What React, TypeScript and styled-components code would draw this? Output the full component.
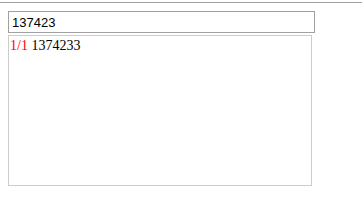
import React, { useState } from "react";
import styled, { createGlobalStyle } from "styled-components";

const GlobalStyle = createGlobalStyle`
    html, body {
        margin: 0;
        padding: 0;
        background: #fff;
    }
`;

const Page = styled.div`
    padding-top: 2px;
`;

const TopRule = styled.div`
    height: 1px;
    background: #a0a0a0;
    margin-right: 2px;
`;

const Panel = styled.div`
    display: flex;
    flex-direction: column;
    align-items: flex-start;
    gap: 2px;
    padding: 8px 0 0 8px;
`;

const SearchInput = styled.input`
    box-sizing: border-box;
    width: 307px;
    height: 22px;
    margin: 0;
    padding: 1px 3px;
    border: 1px solid #a0a0a0;
    font-family: "Liberation Sans", Arial, sans-serif;
    font-size: 13px;
    color: #000;
    outline: none;
`;

const Results = styled.div`
    box-sizing: border-box;
    width: 304px;
    height: 151px;
    padding: 2px 1px;
    border: 1px solid #ccc;
    font-family: "Liberation Serif", "Times New Roman", serif;
    font-size: 14px;
    line-height: 16px;
    color: #000;
`;

const Counter = styled.span`
    color: #f00;
`;

export default function App() {
    const [query, setQuery] = useState("137423");

    return (
        <Page>
            <GlobalStyle />
            <TopRule />
            <Panel>
                <SearchInput value={query} onChange={(e) => setQuery(e.target.value)} />
                <Results>
                    <Counter>1/1</Counter> 1374233
                </Results>
            </Panel>
        </Page>
    );
}
